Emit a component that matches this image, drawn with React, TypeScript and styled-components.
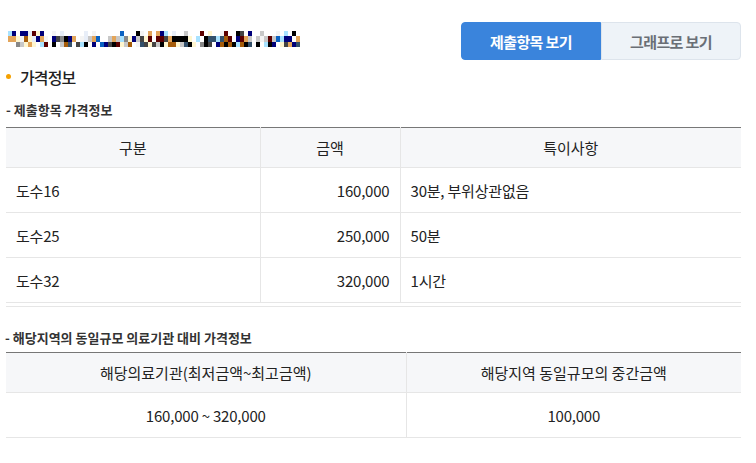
import styled, { createGlobalStyle } from "styled-components";
import { useState } from "react";

const priceRows = [
  { name: "도수16", price: "160,000", note: "30분, 부위상관없음" },
  { name: "도수25", price: "250,000", note: "50분" },
  { name: "도수32", price: "320,000", note: "1시간" },
];

// 가려진 제목 (모자이크)
const palette = [
  "#ffffff", "#ffffff", "#ffffff", "#f4f4f4", "#000000", "#000000", "#00007a",
  "#5c0000", "#a65c0a", "#e3a55a", "#fff6cf", "#a8e2ff", "#888888", "#444444",
  "#0a62c2", "#33506b", "#c8c8c8", "#e8eef8",
];

function makeMosaic(cols: number, rows: number) {
  let seed = 73;
  const rand = () => {
    seed = (seed * 1103515245 + 12345) % 2147483648;
    return seed / 2147483648;
  };
  const cells: { x: number; y: number; c: string }[] = [];
  for (let y = 0; y < rows; y++) {
    for (let x = 0; x < cols; x++) {
      const r = rand();
      const c = y === 0 && r < 0.45 ? "#ffffff" : palette[Math.floor(rand() * palette.length)];
      cells.push({ x, y, c });
    }
  }
  return cells;
}

const mosaic = makeMosaic(73, 3);

function Mosaic() {
  return (
    <MosaicSvg width={292} height={16} viewBox="0 0 292 16">
      {mosaic.map((m, i) => (
        <rect key={i} x={m.x * 4} y={m.y * 5.33} width={4} height={5.4} fill={m.c} />
      ))}
    </MosaicSvg>
  );
}

export default function App() {
  const [tab, setTab] = useState("list");
  return (
    <>
      <GlobalStyle />
      <Page>
        <Header>
          <Mosaic />
          <TabGroup>
            <TabButton active={tab === "list"} onClick={() => setTab("list")}>
              제출항목 보기
            </TabButton>
            <TabButton active={tab === "graph"} onClick={() => setTab("graph")}>
              그래프로 보기
            </TabButton>
          </TabGroup>
        </Header>

        <SectionTitle>가격정보</SectionTitle>

        <SubTitle>- 제출항목 가격정보</SubTitle>
        <TableWrap>
          <Table>
            <colgroup>
              <col style={{ width: 254 }} />
              <col style={{ width: 140 }} />
              <col />
            </colgroup>
            <thead>
              <tr>
                <Th>구분</Th>
                <Th>금액</Th>
                <Th>특이사항</Th>
              </tr>
            </thead>
            <tbody>
              {priceRows.map((row) => (
                <tr key={row.name}>
                  <Td>{row.name}</Td>
                  <Td align="right">{row.price}</Td>
                  <Td>{row.note}</Td>
                </tr>
              ))}
            </tbody>
          </Table>
        </TableWrap>

        <SubTitle2>- 해당지역의 동일규모 의료기관 대비 가격정보</SubTitle2>
        <CompareTable>
          <colgroup>
            <col style={{ width: 400 }} />
            <col />
          </colgroup>
          <thead>
            <tr>
              <Th>해당의료기관(최저금액~최고금액)</Th>
              <Th>해당지역 동일규모의 중간금액</Th>
            </tr>
          </thead>
          <tbody>
            <tr>
              <Td align="center">160,000 ~ 320,000</Td>
              <Td align="center">100,000</Td>
            </tr>
          </tbody>
        </CompareTable>
      </Page>
    </>
  );
}

const GlobalStyle = createGlobalStyle`
  html, body, #root {
    margin: 0;
    padding: 0;
    background: #fff;
  }
  body {
    font-family: "Noto Sans CJK KR", "Noto Sans", sans-serif;
    color: #222;
  }
`;

const Page = styled.div`
  width: 735px;
  padding: 22px 0 0 6px;
`;

const Header = styled.div`
  display: flex;
  justify-content: space-between;
  align-items: flex-start;
  height: 38px;
`;

const MosaicSvg = styled.svg`
  display: block;
  margin: 9px 0 0 2px;
  shape-rendering: crispEdges;
`;

const TabGroup = styled.div`
  display: flex;
`;

const TabButton = styled.button<{ active?: boolean }>`
  width: 140px;
  height: 38px;
  padding: 0;
  font-family: inherit;
  font-size: 15px;
  font-weight: 700;
  letter-spacing: -0.6px;
  cursor: pointer;
  border: 1px solid ${({ active }) => (active ? "#3a84dc" : "#dde4ec")};
  background: ${({ active }) => (active ? "#3a84dc" : "#eef3f8")};
  color: ${({ active }) => (active ? "#fff" : "#6a6f76")};
  border-radius: ${({ active }) => (active ? "4px 0 0 4px" : "0 4px 4px 0")};
`;

const SectionTitle = styled.h2`
  position: relative;
  margin: 7px 0 0;
  padding-left: 14px;
  font-size: 16px;
  font-weight: 500;
  line-height: 20px;
  letter-spacing: -0.9px;
  color: #222;

  &::before {
    content: "";
    position: absolute;
    left: 0;
    top: 7px;
    width: 5px;
    height: 5px;
    border-radius: 50%;
    background: #f5a100;
  }
`;

const SubTitle = styled.h3`
  margin: 14px 0 0;
  font-size: 13px;
  font-weight: 700;
  line-height: 18px;
  letter-spacing: 0;
  color: #333;
`;

const SubTitle2 = styled(SubTitle)`
  margin-top: 22px;
  margin-left: -1px;
`;

const TableWrap = styled.div`
  margin-top: 8px;
  padding-bottom: 3px;
  border-bottom: 1px solid #e6e6e6;
`;

const Table = styled.table`
  width: 100%;
  border-collapse: collapse;
  table-layout: fixed;
  border-top: 1px solid #777;
`;

const CompareTable = styled(Table)`
  margin-top: 5px;
`;

const Th = styled.th`
  height: 39px;
  padding: 0;
  background: #f6f7f9;
  font-size: 15px;
  font-weight: 400;
  color: #222;
  text-align: center;
  border-bottom: 1px solid #e6e6e6;
  & + & {
    border-left: 1px solid #e6e6e6;
  }
`;

const Td = styled.td<{ align?: string }>`
  height: 44px;
  padding: 0 10px;
  font-size: 15px;
  letter-spacing: -0.2px;
  color: #222;
  text-align: ${({ align }) => align || "left"};
  border-bottom: 1px solid #e6e6e6;
  & + & {
    border-left: 1px solid #e6e6e6;
  }
`;
